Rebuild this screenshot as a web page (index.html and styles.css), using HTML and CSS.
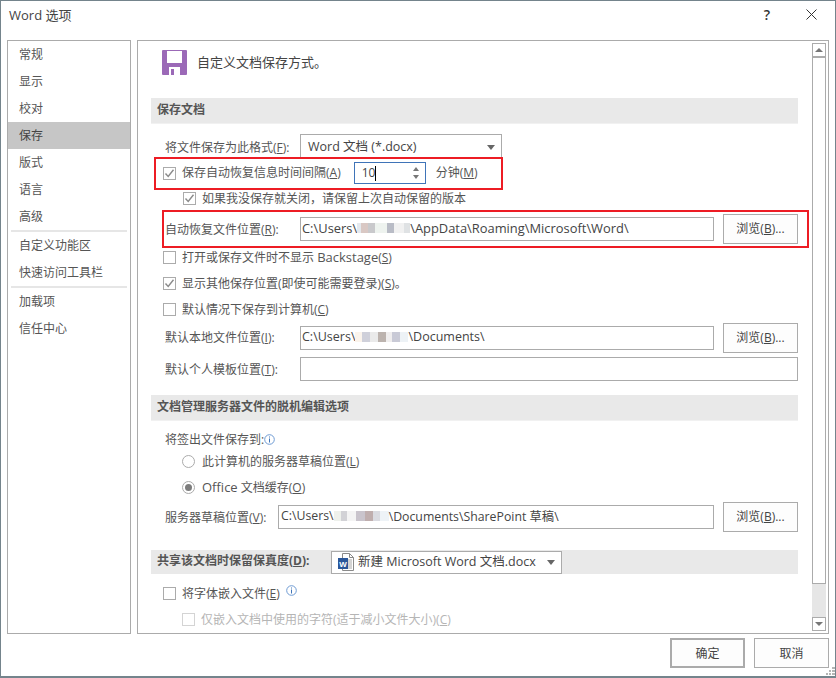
FILE: index.html
```html
<!DOCTYPE html>
<html lang="zh-CN">
<head>
<meta charset="utf-8">
<title>Word 选项</title>
<link rel="stylesheet" href="styles.css">
</head>
<body>
<div class="dialog">
  <header class="titlebar">
    <span class="title">Word 选项</span>
    <span class="help">?</span>
    <svg class="close" width="11" height="11" viewBox="0 0 11 11"><path d="M.5.5l10 10M10.5.5l-10 10" stroke="#333" fill="none"/></svg>
  </header>
  <main class="main">
    <nav class="nav">
      <div class="nav-item">常规</div>
      <div class="nav-item">显示</div>
      <div class="nav-item">校对</div>
      <div class="nav-item active">保存</div>
      <div class="nav-item">版式</div>
      <div class="nav-item">语言</div>
      <div class="nav-item">高级</div>
      <div class="nav-sep"></div>
      <div class="nav-item">自定义功能区</div>
      <div class="nav-item">快速访问工具栏</div>
      <div class="nav-sep"></div>
      <div class="nav-item">加载项</div>
      <div class="nav-item">信任中心</div>
    </nav>
    <section class="panel">
      <div class="content">
        <div class="head">
          <svg class="save-icon" width="25" height="25" viewBox="0 0 25 25"><path d="M0 1a1 1 0 0 1 1-1h23a1 1 0 0 1 1 1v23a1 1 0 0 1-1 1H1a1 1 0 0 1-1-1z" fill="#9b69b7"/><rect x="5" y="1" width="15" height="12" fill="#fff"/><rect x="7" y="17" width="11" height="8" fill="#fff"/><rect x="9" y="19" width="3" height="6" fill="#9b69b7"/></svg>
          <span class="head-text">自定义文档保存方式。</span>
        </div>

        <div class="section s1"><b>保存文档</b></div>

        <div class="row r-format">
          <label class="lab w149">将文件保存为此格式(<u>F</u>):</label>
          <div class="select fmt"><span>Word 文档 (*.docx)</span><i class="caret"></i></div>
        </div>

        <div class="row r-auto">
          <span class="check on"><svg width="11" height="11" viewBox="0 0 11 11"><path d="M1.5 5.5l2.7 3L9.5 1.8" stroke="#8a8a8a" stroke-width="1.4" fill="none"/></svg></span>
          <span class="txt">保存自动恢复信息时间间隔(<u>A</u>)</span>
          <div class="spin"><span class="spin-v">10</span><span class="cursor"></span><span class="arrows"><i class="up"></i><i class="down"></i></span></div>
          <span class="txt unit">分钟(<u>M</u>)</span>
        </div>

        <div class="row r-keep">
          <span class="check sub on"><svg width="11" height="11" viewBox="0 0 11 11"><path d="M1.5 5.5l2.7 3L9.5 1.8" stroke="#8a8a8a" stroke-width="1.4" fill="none"/></svg></span>
          <span class="txt">如果我没保存就关闭，请保留上次自动保留的版本</span>
        </div>

        <div class="row path r-loc">
          <label class="lab w149">自动恢复文件位置(<u>R</u>):</label>
          <div class="input i-loc"><span>C:\Users\</span><span class="mosaic m1"></span><span>\AppData\Roaming\Microsoft\Word\</span></div>
          <button class="btn">浏览(<u>B</u>)...</button>
        </div>

        <div class="row chk">
          <span class="check"></span>
          <span class="txt">打开或保存文件时不显示 <span class="lat">Backstage</span>(<u>S</u>)</span>
        </div>
        <div class="row chk">
          <span class="check on"><svg width="11" height="11" viewBox="0 0 11 11"><path d="M1.5 5.5l2.7 3L9.5 1.8" stroke="#8a8a8a" stroke-width="1.4" fill="none"/></svg></span>
          <span class="txt">显示其他保存位置(即使可能需要登录)(<u>S</u>)。</span>
        </div>
        <div class="row chk">
          <span class="check"></span>
          <span class="txt">默认情况下保存到计算机(<u>C</u>)</span>
        </div>

        <div class="row path r-local">
          <label class="lab w149">默认本地文件位置(<u>I</u>):</label>
          <div class="input"><span>C:\Users\</span><span class="mosaic m2"></span><span>\Documents\</span></div>
          <button class="btn">浏览(<u>B</u>)...</button>
        </div>
        <div class="row r-tpl">
          <label class="lab w149">默认个人模板位置(<u>T</u>):</label>
          <div class="input wide"></div>
        </div>

        <div class="section s2"><b>文档管理服务器文件的脱机编辑选项</b></div>

        <div class="row r-co">
          <span class="txt">将签出文件保存到:</span>
          <svg class="info" width="11" height="11" viewBox="0 0 11 11"><circle cx="5.5" cy="5.5" r="4.8" fill="none" stroke="#6e9bd3"/><path d="M5.5 4.5v4M5.5 2.5v1" stroke="#3f74b8" fill="none"/></svg>
        </div>
        <div class="row r-radio">
          <span class="radio"></span>
          <span class="txt">此计算机的服务器草稿位置(<u>L</u>)</span>
        </div>
        <div class="row r-radio r-radio2">
          <span class="radio on"></span>
          <span class="txt"><span class="lat">Office</span> 文档缓存(<u>O</u>)</span>
        </div>
        <div class="row path r-srv">
          <label class="lab w127">服务器草稿位置(<u>V</u>):</label>
          <div class="input i-srv"><span>C:\Users\</span><span class="mosaic m3"></span><span>\Documents\SharePoint 草稿\</span></div>
          <button class="btn">浏览(<u>B</u>)...</button>
        </div>

        <div class="section s3">
          <b class="s3-lab">共享该文档时保留保真度(<u>D</u>):</b>
          <div class="select doc">
            <svg class="word-icon" width="16" height="18" viewBox="0 0 16 18"><path d="M4.5.5h7l4 4v13h-11z" fill="#fff" stroke="#8a8a8a"/><path d="M11.5.5v4h4" fill="none" stroke="#8a8a8a"/><path d="M10 7h4M10 9h4M10 11h4M10 13h4M10 15h4" stroke="#a8a8a8"/><rect x="0" y="5" width="10" height="11" fill="#2b579a"/><text x="5" y="14" text-anchor="middle" font-size="8" font-weight="700" font-family="Liberation Sans" fill="#fff">W</text></svg>
            <span>新建 Microsoft Word 文档.docx</span><i class="caret"></i>
          </div>
        </div>

        <div class="row chk r-embed">
          <span class="check"></span>
          <span class="txt">将字体嵌入文件(<u>E</u>)</span>
          <svg class="info up-info" width="11" height="11" viewBox="0 0 11 11"><circle cx="5.5" cy="5.5" r="4.8" fill="none" stroke="#6e9bd3"/><path d="M5.5 4.5v4M5.5 2.5v1" stroke="#3f74b8" fill="none"/></svg>
        </div>
        <div class="row chk r-sub">
          <span class="check off"></span>
          <span class="txt dim">仅嵌入文档中使用的字符(适于减小文件大小)(<u>C</u>)</span>
        </div>
      </div>
      <div class="scrollbar">
        <div class="sb-btn"><i class="sb-up"></i></div>
        <div class="sb-thumb"></div>
        <div class="sb-track"></div>
        <div class="sb-btn"><i class="sb-down"></i></div>
      </div>
    </section>
  </main>
  <footer class="footer">
    <button class="btn foot default">确定</button>
    <button class="btn foot">取消</button>
  </footer>
  <svg class="grip" width="9" height="9" viewBox="0 0 9 9"><path d="M6 0h3v2H6zM3 3h2v2H3zM6 3h3v2H6zM0 6h2v2H0zM3 6h2v2H3zM6 6h3v2H6z" fill="#b5b5b5"/></svg>
  <div class="mark m-a"></div>
  <div class="mark m-b"></div>
</div>
</body>
</html>
```
FILE: styles.css
```css
* { box-sizing: border-box; }
html, body { margin: 0; padding: 0; background: #fff; }
body {
  font-family: "Open Sans", "Noto Sans CJK SC", sans-serif;
  font-size: 12px;
  color: #555;
  width: 836px;
  height: 678px;
  overflow: hidden;
}
u { text-underline-offset: 1px; }
.lat { font-size: 13px; }
.dialog {
  position: relative;
  width: 836px;
  height: 678px;
  background: #fff;
  border: 1px solid #74848c;
  border-width: 1px 1px 2px 1px;
  display: flex;
  flex-direction: column;
}
.titlebar {
  height: 39px;
  flex: none;
  display: flex;
  align-items: center;
  padding: 0 18px 12px 8px;
  color: #444;
}
.title { font-size: 13px; flex: 1; }
.help { font-size: 14px; font-weight: 600; margin-right: 36px; color: #333; }
.close { flex: none; }

.main { flex: none; height: 595px; display: flex; padding: 0 5px 0 6px; gap: 6px; }

.nav {
  width: 124px;
  height: 594px;
  border: 1px solid #ababab;
  flex: none;
}
.nav-item {
  height: 27px;
  line-height: 27px;
  padding-left: 11px;
  color: #555;
}
.nav-item.active { background: #c6c6c6; color: #444; }
.nav-sep { height: 2px; margin: 0 3px; background: #e6e6e6; }

.panel {
  flex: none;
  width: 692px;
  height: 594px;
  border: 1px solid #ababab;
  display: flex;
  padding-right: 2px;
}
.content { width: 660px; padding-left: 13px; flex: none; overflow: hidden; }
.head { margin-top: 9px; height: 25px; display: flex; align-items: center; margin-left: 11px; }
.save-icon { flex: none; }
.head-text { margin-left: 10px; font-size: 13px; color: #444; padding-bottom: 2px; }

.section {
  width: 647px;
  background: #e9e9e9;
  border-bottom: 1px solid #f1f1f1;
  display: flex;
  align-items: center;
  padding-left: 6px;
  padding-bottom: 4px;
  color: #555;
}
.section b { font-weight: 700; font-size: 12px; }
.s1 { margin-top: 23px; height: 26px; }
.s2 { margin-top: 14px; height: 26px; }
.s3 { margin-top: 18px; height: 24px; border-bottom: 0; padding-bottom: 0; }
.s3-lab { width: 174px; flex: none; padding-bottom: 4px; }

.row { display: flex; align-items: center; padding-left: 14px; }
.txt { white-space: nowrap; }
.lab { flex: none; white-space: nowrap; }
.w149 { width: 135px; }
.w127 { width: 113px; }
.dim { color: #b5b5b5; }

.r-format { margin-top: 10px; height: 25px; }
.r-auto { margin-top: 3px; height: 22px; padding-left: 12px; }
.r-auto .txt { padding-bottom: 2px; }
.r-keep { margin-top: 4px; height: 20px; padding-left: 32px; }
.path { height: 30px; }
.r-loc { margin-top: 6px; }
.chk { height: 26px; padding-left: 12px; }
.r-local { margin-top: 1px; }
.r-local .lab { padding-bottom: 2px; }
.r-tpl { margin-top: 4px; height: 24px; }
.r-co { margin-top: 8px; height: 20px; }
.r-radio { height: 24px; margin-top: 0; padding-left: 31px; }
.r-radio2 { margin-top: 2px; }
.r-srv { margin-top: 3px; }
.r-embed { margin-top: 6px; }
.r-sub { padding-left: 31px; }

.check {
  width: 13px; height: 13px;
  flex: none;
  border: 1px solid #ababab;
  background: #fff;
  margin-right: 6px;
  display: flex;
  align-items: center;
  justify-content: center;
}
.check.off { border-color: #d4d4d4; }
.radio {
  width: 13px; height: 13px; flex: none;
  border: 1px solid #ababab;
  border-radius: 50%;
  margin-right: 7px;
  background: #fff;
  display: flex;
  align-items: center;
  justify-content: center;
}
.radio.on::after { content: ""; width: 7px; height: 7px; border-radius: 50%; background: #7d7d7d; }

.select {
  border: 1px solid #ababab;
  background: #fff;
  display: flex;
  align-items: center;
  position: relative;
  color: #444;
  font-size: 12.5px;
  padding-bottom: 3px;
}
.fmt { width: 202px; height: 25px; padding-left: 7px; }
.doc { width: 231px; height: 23px; padding-left: 6px; }
.doc span { margin-left: 4px; white-space: nowrap; }
.word-icon { flex: none; margin-top: 2px; }
.caret {
  position: absolute; right: 6px; top: 50%; margin-top: -2px;
  width: 0; height: 0;
  border-left: 4px solid transparent; border-right: 4px solid transparent;
  border-top: 5px solid #666;
}
.spin {
  width: 72px; height: 22px; flex: none;
  border: 1px solid #3f74b8;
  margin-left: 13px;
  display: flex;
  align-items: center;
  padding-left: 7px;
  color: #444;
  position: relative;
  font-size: 12px;
}
.spin-v { padding-bottom: 2px; }
.cursor { width: 1px; height: 15px; background: #000; }
.arrows { position: absolute; right: 3px; top: 2px; bottom: 2px; width: 11px; display: flex; flex-direction: column; justify-content: space-between; align-items: center; padding: 2px 0; }
.arrows i { width: 0; height: 0; border-left: 3.5px solid transparent; border-right: 3.5px solid transparent; }
.arrows .up { border-bottom: 4px solid #777; }
.arrows .down { border-top: 4px solid #777; }
.unit { margin-left: 10px; }

.input {
  flex: none;
  height: 24px;
  border: 1px solid #ababab;
  background: #fff;
  display: flex;
  align-items: center;
  padding: 0 0 3px 1px;
  white-space: nowrap;
  color: #444;
  font-size: 12.5px;
  width: 414px;
}
.i-loc { font-size: 12.9px; }
.i-srv { font-size: 12.3px; padding-left: 2px; }
.r-srv .input { width: 436px; }
.r-tpl .input.wide { width: 498px; }
.btn {
  font: inherit;
  color: #444;
  width: 75px;
  height: 30px;
  flex: none;
  margin-left: 9px;
  border: 1px solid #ababab;
  background: #fdfdfd;
  padding: 0 0 2px;
}
.footer { height: 30px; flex: none; margin-top: 3px; display: flex; justify-content: flex-end; padding-right: 6px; }
.foot { margin-left: 9px; padding: 0; }
.foot.default { border: 2px solid #ababab; }

.mosaic { display: inline-block; height: 10px; flex: none; }
.m1 {
  width: 53px;
  background: linear-gradient(90deg, #e4e9ee 0 8%, #d9c8c4 8% 20%, #c9c9cc 20% 34%, #eef3ef 34% 56%, #b9bcc6 56% 70%, #f1f1f1 70% 88%, #dfe2e4 88%);
}
.m2 {
  width: 53px;
  background: linear-gradient(90deg, #fbf4ec 0 14%, #cfd0da 14% 28%, #eaeaea 28% 44%, #bcb3ae 44% 58%, #f0eeee 58% 70%, #c9cad6 70% 84%, #edf2f6 84%);
}
.m3 {
  width: 55px;
  background: linear-gradient(90deg, #eef1ec 0 12%, #d2d2d6 12% 24%, #f4f4f4 24% 40%, #c9c4cc 40% 56%, #bfaeae 56% 70%, #dadbe1 70% 84%, #eef3f7 84%);
}

.info { flex: none; margin-left: 0; }
.up-info { margin: -6px 0 0 6px; }

.scrollbar {
  margin: 2px 0 2px 14px;
  width: 14px;
  flex: none;
  display: flex;
  flex-direction: column;
  background: #e6e6e6;
}
.sb-btn { height: 14px; flex: none; border: 1px solid #ababab; background: #fff; display: flex; align-items: center; justify-content: center; }
.sb-up { width: 0; height: 0; border-left: 4px solid transparent; border-right: 4px solid transparent; border-bottom: 4px solid #777; }
.sb-down { width: 0; height: 0; border-left: 4px solid transparent; border-right: 4px solid transparent; border-top: 4px solid #777; }
.sb-thumb { height: 527px; flex: none; border: 1px solid #ababab; background: #fff; }
.sb-track { flex: 1; }

.grip { position: absolute; right: 0; bottom: 0; }
.mark { position: absolute; border: 2px solid #ed1c24; pointer-events: none; }
.m-a { left: 153px; top: 156px; width: 349px; height: 33px; }
.m-b { left: 161px; top: 209px; width: 647px; height: 38px; }
```
